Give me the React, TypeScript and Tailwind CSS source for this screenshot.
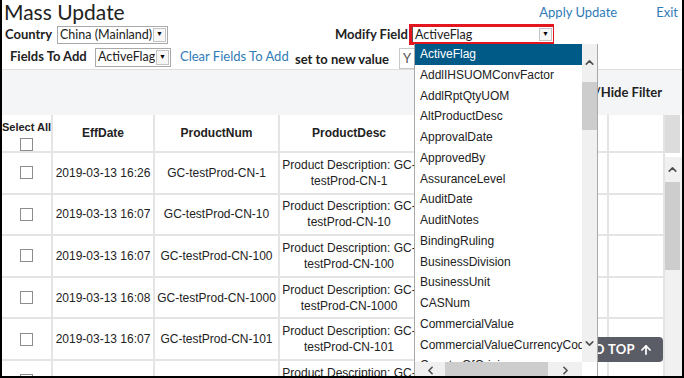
import { ArrowUp, ChevronDown, ChevronLeft, ChevronRight, ChevronUp } from "lucide-react";

const ui = "font-['Lato','Open_Sans',sans-serif]";
const arial = "font-['Liberation_Sans',Arial,sans-serif]";

const rows = [
  { date: "2019-03-13 16:26", num: "GC-testProd-CN-1" },
  { date: "2019-03-13 16:07", num: "GC-testProd-CN-10" },
  { date: "2019-03-13 16:07", num: "GC-testProd-CN-100" },
  { date: "2019-03-13 16:08", num: "GC-testProd-CN-1000" },
  { date: "2019-03-13 16:07", num: "GC-testProd-CN-101" },
  { date: "2019-03-13 16:07", num: "GC-testProd-CN-102" },
];

const fields = [
  "ActiveFlag",
  "AddlIHSUOMConvFactor",
  "AddlRptQtyUOM",
  "AltProductDesc",
  "ApprovalDate",
  "ApprovedBy",
  "AssuranceLevel",
  "AuditDate",
  "AuditNotes",
  "BindingRuling",
  "BusinessDivision",
  "BusinessUnit",
  "CASNum",
  "CommercialValue",
  "CommercialValueCurrencyCode",
  "CountryOfOrigin",
  "CreatedBy",
];

function FakeSelect({ value, className }: { value: string; className: string }) {
  return (
    <div className={`flex items-stretch border border-[#a9a9a9] bg-white ${className}`}>
      <span className={`flex-1 self-center overflow-hidden whitespace-nowrap pl-[2px] text-[12.5px] leading-[16px] text-[#222] ${ui}`}>
        {value}
      </span>
      <span className="m-[1px] flex w-[13px] items-center justify-center border border-[#c4c4c4] bg-[#f7f7f7] text-[7px] text-black">
        ▼
      </span>
    </div>
  );
}

function Checkbox() {
  return <div className="h-[13px] w-[13px] border border-[#8c8c8c] bg-white" />;
}

const cell = "border-b-2 border-r-2 border-[#e4e4e4] flex items-center justify-center text-center";

export default function App() {
  return (
    <div className="relative h-[378px] w-[684px] overflow-hidden border-x-2 border-b-2 border-black bg-white text-[#222]">
      {/* title row */}
      <div className="flex h-[24px] items-start">
        <h1 className={`pl-[2px] text-[21px] leading-[24px] text-[#222] ${ui}`}>Mass Update</h1>
        <a className={`ml-auto mt-[4px] text-[13px] leading-[16px] text-[#2f7bb8] ${ui}`}>Apply Update</a>
        <a className={`ml-[39px] mr-[4px] mt-[4px] text-[13px] leading-[16px] text-[#2f7bb8] ${ui}`}>Exit</a>
      </div>

      {/* country / modify field */}
      <div className="flex h-[21px] items-center">
        <div className="flex w-[333px] items-center">
          <span className={`w-[52px] whitespace-nowrap pl-[3px] text-[13px] font-bold ${ui}`}>Country</span>
          <FakeSelect value="China (Mainland)" className="ml-[3px] h-[18px] w-[111px]" />
        </div>
        <span className={`w-[74px] overflow-hidden whitespace-nowrap text-[13px] font-bold ${ui}`}>Modify Field</span>
        <div className="h-[21px] w-[145px] border-[3px] border-[#e3161f] bg-white">
          <FakeSelect value="ActiveFlag" className="h-full w-[141px] border-y-0 border-r-0 border-l-[#555]" />
        </div>
      </div>

      {/* fields to add */}
      <div className="flex h-[24px] items-center">
        <span className={`w-[90px] whitespace-nowrap pl-[8px] text-[13px] font-bold ${ui}`}>Fields To Add</span>
        <FakeSelect value="ActiveFlag" className="ml-[3px] h-[19px] w-[76px]" />
        <a className={`ml-[9px] w-[115px] whitespace-nowrap text-[13px] text-[#2f7bb8] ${ui}`}>Clear Fields To Add</a>
        <span className={`mt-[5px] w-[104px] whitespace-nowrap text-[13px] font-bold ${ui}`}>set to new value</span>
        <div className={`mt-[3px] flex h-[21px] w-[40px] items-center border border-[#c8c8c8] pl-[3px] text-[13px] text-[#555] ${ui}`}>Y</div>
      </div>

      {/* toolbar band */}
      <div className="flex h-[46px] items-center justify-end border-t border-[#dedede] bg-[#f4f5f7] pr-[20px]">
        <span className={`text-[13px] font-bold ${ui}`}>Show/Hide Filter</span>
      </div>

      {/* table */}
      <div className="flex">
        <div className={`grid w-[663px] grid-cols-[51px_102px_125px_140px_189px_56px] text-[12px] leading-[16px] text-[#222] ${arial}`}>
          <div className="flex h-[38px] flex-col items-center border-b-2 border-r-2 border-[#e4e4e4] pt-[5px] font-bold">
            <span className="whitespace-nowrap text-[11px] leading-[14px]">Select All</span>
            <div className="mt-[4px]">
              <Checkbox />
            </div>
          </div>
          <div className={`${cell} h-[38px] font-bold`}>EffDate</div>
          <div className={`${cell} font-bold`}>ProductNum</div>
          <div className={`${cell} font-bold`}>ProductDesc</div>
          <div className={cell} />
          <div className={cell} />
          {rows.map((r) => (
            <div key={r.num} className="contents">
              <div className={`${cell} h-[41.6px]`}>
                <Checkbox />
              </div>
              <div className={`${cell} whitespace-nowrap`}>{r.date}</div>
              <div className={`${cell} whitespace-nowrap`}>{r.num}</div>
              <div className={`${cell} px-[1px]`}>Product Description: {r.num}</div>
              <div className={cell} />
              <div className={cell} />
            </div>
          ))}
        </div>
        <div className="flex w-[17px] flex-col">
          <div className="mr-[2px] h-[38px] bg-[#dcdcdc]" />
          <div className="mt-[4px] flex flex-1 flex-col bg-[#f1f1f1] pr-[2px]">
            <div className="flex h-[25px] items-center justify-center">
              <ChevronUp size={13} strokeWidth={3} className="text-[#505050]" />
            </div>
            <div className="h-[88px] bg-[#cdcdcd]" />
          </div>
        </div>
      </div>

      {/* back to top */}
      <div className={`absolute right-[19px] top-[337px] flex h-[25px] items-center gap-[4px] rounded-[4px] bg-[#5b5d66] pl-[12px] pr-[10px] text-[13px] font-bold tracking-wide text-white ${ui}`}>
        BACK TO TOP
        <ArrowUp size={14} strokeWidth={3} />
      </div>

      {/* open dropdown of Modify Field */}
      <div className="absolute left-[412px] top-[44px] z-10 flex h-[334px] w-[184px] flex-col border-x border-[#a9a9a9] bg-white">
        <div className="flex h-[318px]">
          <div className={`w-[167px] overflow-hidden text-[12px] text-[#222] ${arial}`}>
            {fields.map((f, i) => (
              <div
                key={f}
                className={`h-[20.75px] whitespace-nowrap pl-[5px] leading-[20.75px] ${i === 0 ? "bg-[#005a87] text-white" : ""}`}
              >
                {f}
              </div>
            ))}
          </div>
          <div className="flex w-[15px] flex-col bg-[#f0f0f0]">
            <div className="flex h-[36px] items-center justify-center">
              <ChevronUp size={13} strokeWidth={3} className="text-[#505050]" />
            </div>
            <div className="mt-[2px] h-[48px] bg-[#cdcdcd]" />
            <div className="flex-1" />
            <div className="flex h-[38px] items-center justify-center">
              <ChevronDown size={13} strokeWidth={3} className="text-[#505050]" />
            </div>
          </div>
        </div>
        <div className="flex h-[16px] items-stretch bg-[#f0f0f0]">
          <div className="flex w-[30px] items-center justify-center">
            <ChevronLeft size={13} strokeWidth={3} className="text-[#505050]" />
          </div>
          <div className="h-[14px] w-[103px] bg-[#cdcdcd]" />
          <div className="flex w-[34px] items-center justify-center">
            <ChevronRight size={13} strokeWidth={3} className="text-[#505050]" />
          </div>
          <div className="flex-1 bg-white" />
        </div>
      </div>
    </div>
  );
}
